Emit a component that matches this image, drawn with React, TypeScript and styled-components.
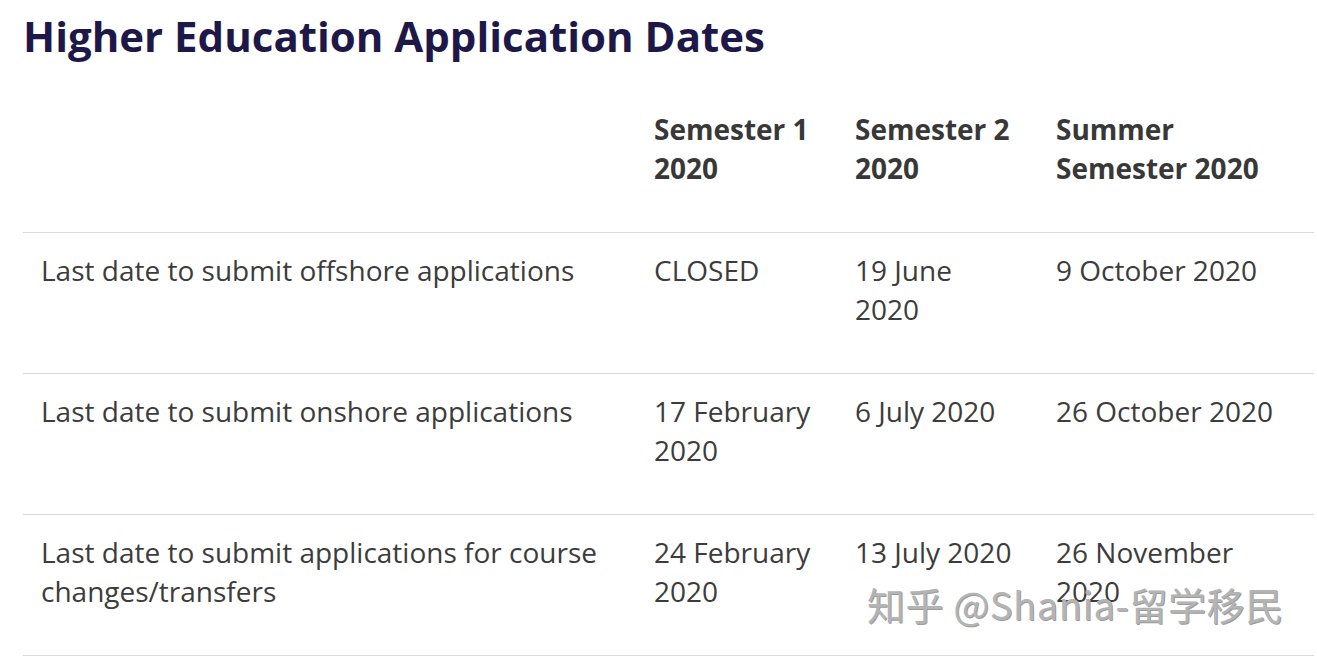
import React from 'react'
import styled, { createGlobalStyle } from 'styled-components'

const GlobalStyle = createGlobalStyle`
  html, body {
    margin: 0;
    padding: 0;
    background: #fff;
  }
  body {
    font-family: 'Open Sans', 'Noto Sans', sans-serif;
  }
`

const Page = styled.div`
  position: relative;
  width: 1317px;
  height: 660px;
  overflow: hidden;
  padding: 0 3px 0 23px;
  box-sizing: border-box;
`

const Title = styled.h1`
  margin: 0;
  padding-top: 11px;
  height: 92px;
  box-sizing: border-box;
  font-family: 'Open Sans', sans-serif;
  font-weight: 700;
  font-size: 42px;
  line-height: 50px;
  color: #1e1848;
`

const Table = styled.div`
  display: grid;
  grid-template-columns: 613px 201px 201px 1fr;
`

const Cell = styled.div<{ $head?: boolean }>`
  padding: 18px 18px 44px 18px;
  font-size: 28px;
  line-height: 39px;
  font-weight: ${({ $head }) => ($head ? 700 : 400)};
  color: ${({ $head }) => ($head ? '#383838' : '#3c3c3c')};
  border-bottom: 1px solid #dcdcdc;
`

// watermark stamped over the bottom-right corner of the table
const Watermark = styled.div`
  position: absolute;
  left: 867px;
  top: 581px;
  font-family: 'Noto Sans CJK SC', 'Noto Sans', sans-serif;
  font-size: 38px;
  line-height: 46px;
  color: #b4b4b4;
  letter-spacing: 0.6px;
  text-shadow: 1px 1px 0 #9c9c9c;
`

const headLines: React.ReactNode[] = [
  '',
  <>Semester 1<br />2020</>,
  <>Semester 2<br />2020</>,
  <>Summer<br />Semester 2020</>,
]

const rows: string[][] = [
  ['Last date to submit offshore applications', 'CLOSED', '19 June 2020', '9 October 2020'],
  ['Last date to submit onshore applications', '17 February 2020', '6 July 2020', '26 October 2020'],
  [
    'Last date to submit applications for course changes/transfers',
    '24 February 2020',
    '13 July 2020',
    '26 November 2020',
  ],
]

export default function App() {
  return (
    <>
      <GlobalStyle />
      <Page>
        <Title>Higher Education Application Dates</Title>
        <Table>
          {headLines.map((h, i) => (
            <Cell key={`h-${i}`} $head>
              {h}
            </Cell>
          ))}
          {rows.map((r, ri) =>
            r.map((c, ci) => <Cell key={`${ri}-${ci}`}>{c}</Cell>),
          )}
        </Table>
        <Watermark>知乎 @Shania-留学移民</Watermark>
      </Page>
    </>
  )
}
